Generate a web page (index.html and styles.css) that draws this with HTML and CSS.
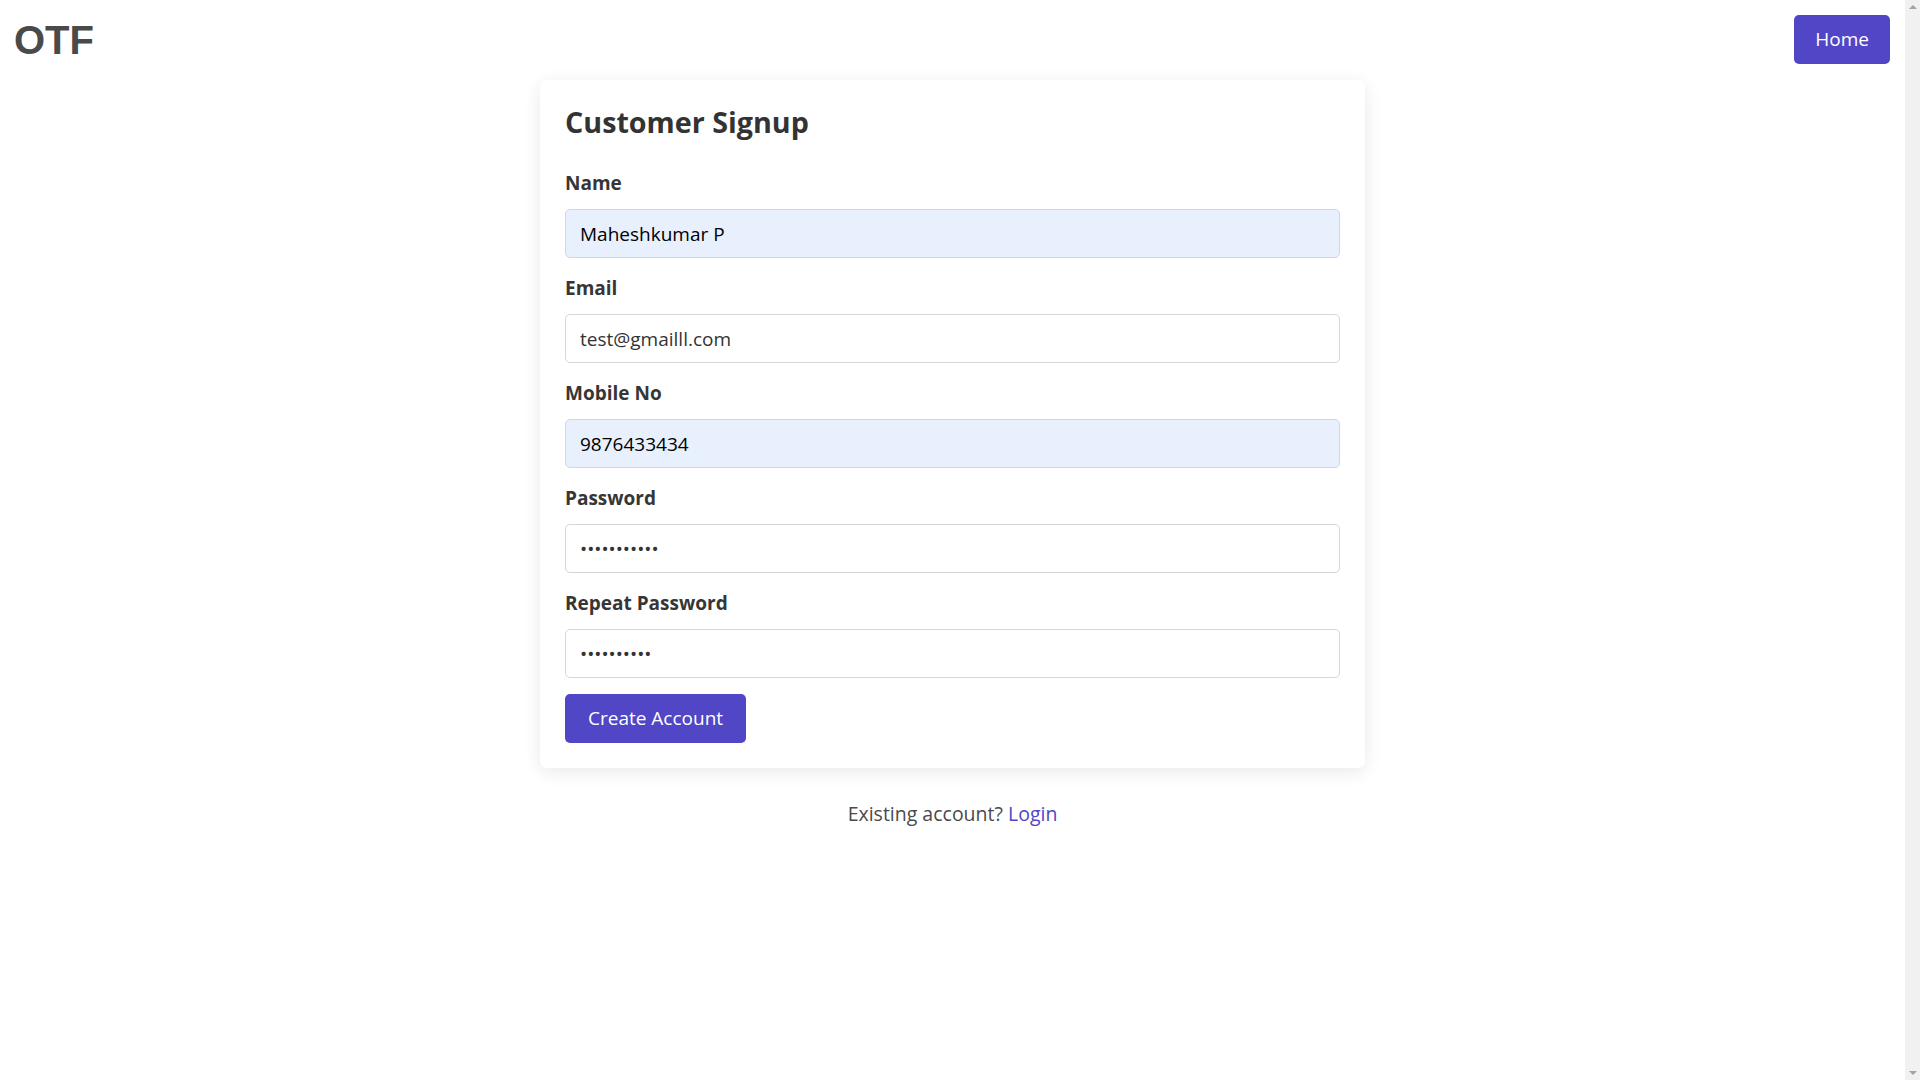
FILE: index.html
```html
<!DOCTYPE html>
<html lang="en">
<head>
<meta charset="utf-8">
<title>Customer Signup</title>
<link rel="stylesheet" href="styles.css">
</head>
<body>
<div class="viewport">
  <header class="topbar">
    <div class="logo">OTF</div>
    <a class="btn btn-home" href="#">Home</a>
  </header>
  <main class="page">
    <form class="card">
      <h1 class="card-title">Customer Signup</h1>
      <div class="field">
        <label class="field-label" for="name">Name</label>
        <input class="field-input autofilled" id="name" type="text" value="Maheshkumar P">
      </div>
      <div class="field">
        <label class="field-label" for="email">Email</label>
        <input class="field-input" id="email" type="email" value="test@gmailll.com">
      </div>
      <div class="field">
        <label class="field-label" for="mobile">Mobile No</label>
        <input class="field-input autofilled" id="mobile" type="text" value="9876433434">
      </div>
      <div class="field">
        <label class="field-label" for="pw">Password</label>
        <input class="field-input" id="pw" type="password" value="abcdefghijk">
      </div>
      <div class="field">
        <label class="field-label" for="pw2">Repeat Password</label>
        <input class="field-input" id="pw2" type="password" value="abcdefghij">
      </div>
      <button class="btn btn-submit" type="button">Create Account</button>
    </form>
    <p class="existing">Existing account? <a class="link" href="#">Login</a></p>
  </main>
</div>
<div class="scrollbar" aria-hidden="true">
  <span class="scroll-arrow up"></span>
  <span class="scroll-arrow down"></span>
</div>
</body>
</html>
```
FILE: styles.css
```css
body {
  margin: 0;
  background: #ffffff;
  font-family: "Open Sans", "Noto Sans", sans-serif;
  color: #333333;
}
.viewport {
  margin-right: 15px;
}
.scrollbar {
  position: fixed;
  top: 0;
  right: 0;
  width: 15px;
  height: 100%;
  background: #f1f1f1;
}
.scroll-arrow {
  position: absolute;
  left: 4px;
  width: 0;
  height: 0;
  border-left: 4px solid transparent;
  border-right: 4px solid transparent;
}
.scroll-arrow.up {
  top: 5px;
  border-bottom: 4px solid #a3a3a3;
}
.scroll-arrow.down {
  bottom: 5px;
  border-top: 4px solid #a3a3a3;
}
.topbar {
  display: flex;
  justify-content: space-between;
  align-items: center;
  padding: 15px 15px 0 14px;
}
.logo {
  font-family: "Liberation Sans", Arial, sans-serif;
  font-weight: 700;
  font-size: 40px;
  line-height: 40px;
  color: #4a4a4a;
}
.btn {
  display: inline-block;
  background: #5046c6;
  color: #ffffff;
  border: 0;
  border-radius: 5px;
  font-family: "Open Sans", "Noto Sans", sans-serif;
  font-size: 19px;
  text-decoration: none;
  cursor: pointer;
}
.btn-home {
  height: 49px;
  line-height: 49px;
  padding: 0 21px;
}
.page {
  display: flex;
  flex-direction: column;
  align-items: center;
}
.card {
  width: 825px;
  box-sizing: border-box;
  margin-top: 16px;
  padding: 25px;
  background: #ffffff;
  border-radius: 7px;
  box-shadow: 0 4px 18px rgba(0, 0, 0, 0.09);
}
.card-title {
  margin: 0 0 28px;
  font-size: 28.7px;
  line-height: 34px;
  padding-top: 0;
  padding-bottom: 2px;
  font-weight: 700;
  color: #333333;
}
.field {
  margin-bottom: 16px;
}
.field-label {
  display: block;
  margin-bottom: 12px;
  font-size: 19px;
  line-height: 28px;
  font-weight: 700;
  color: #363636;
}
.field-input {
  display: block;
  width: 100%;
  height: 49px;
  box-sizing: border-box;
  padding: 0 14px;
  border: 1px solid #d6d6d6;
  border-radius: 5px;
  background: #ffffff;
  font-family: "Open Sans", "Noto Sans", sans-serif;
  font-size: 19px;
  color: #333333;
  outline: none;
}
.field-input.autofilled {
  background: #e8f0fe;
  color: #000000;
}
.btn-submit {
  height: 49px;
  padding: 0 23px;
  line-height: 49px;
}
.existing {
  margin: 32px 0 0;
  font-size: 19.5px;
  line-height: 28px;
  color: #4a4a4a;
}
.link {
  color: #5046c6;
  text-decoration: none;
}
```
